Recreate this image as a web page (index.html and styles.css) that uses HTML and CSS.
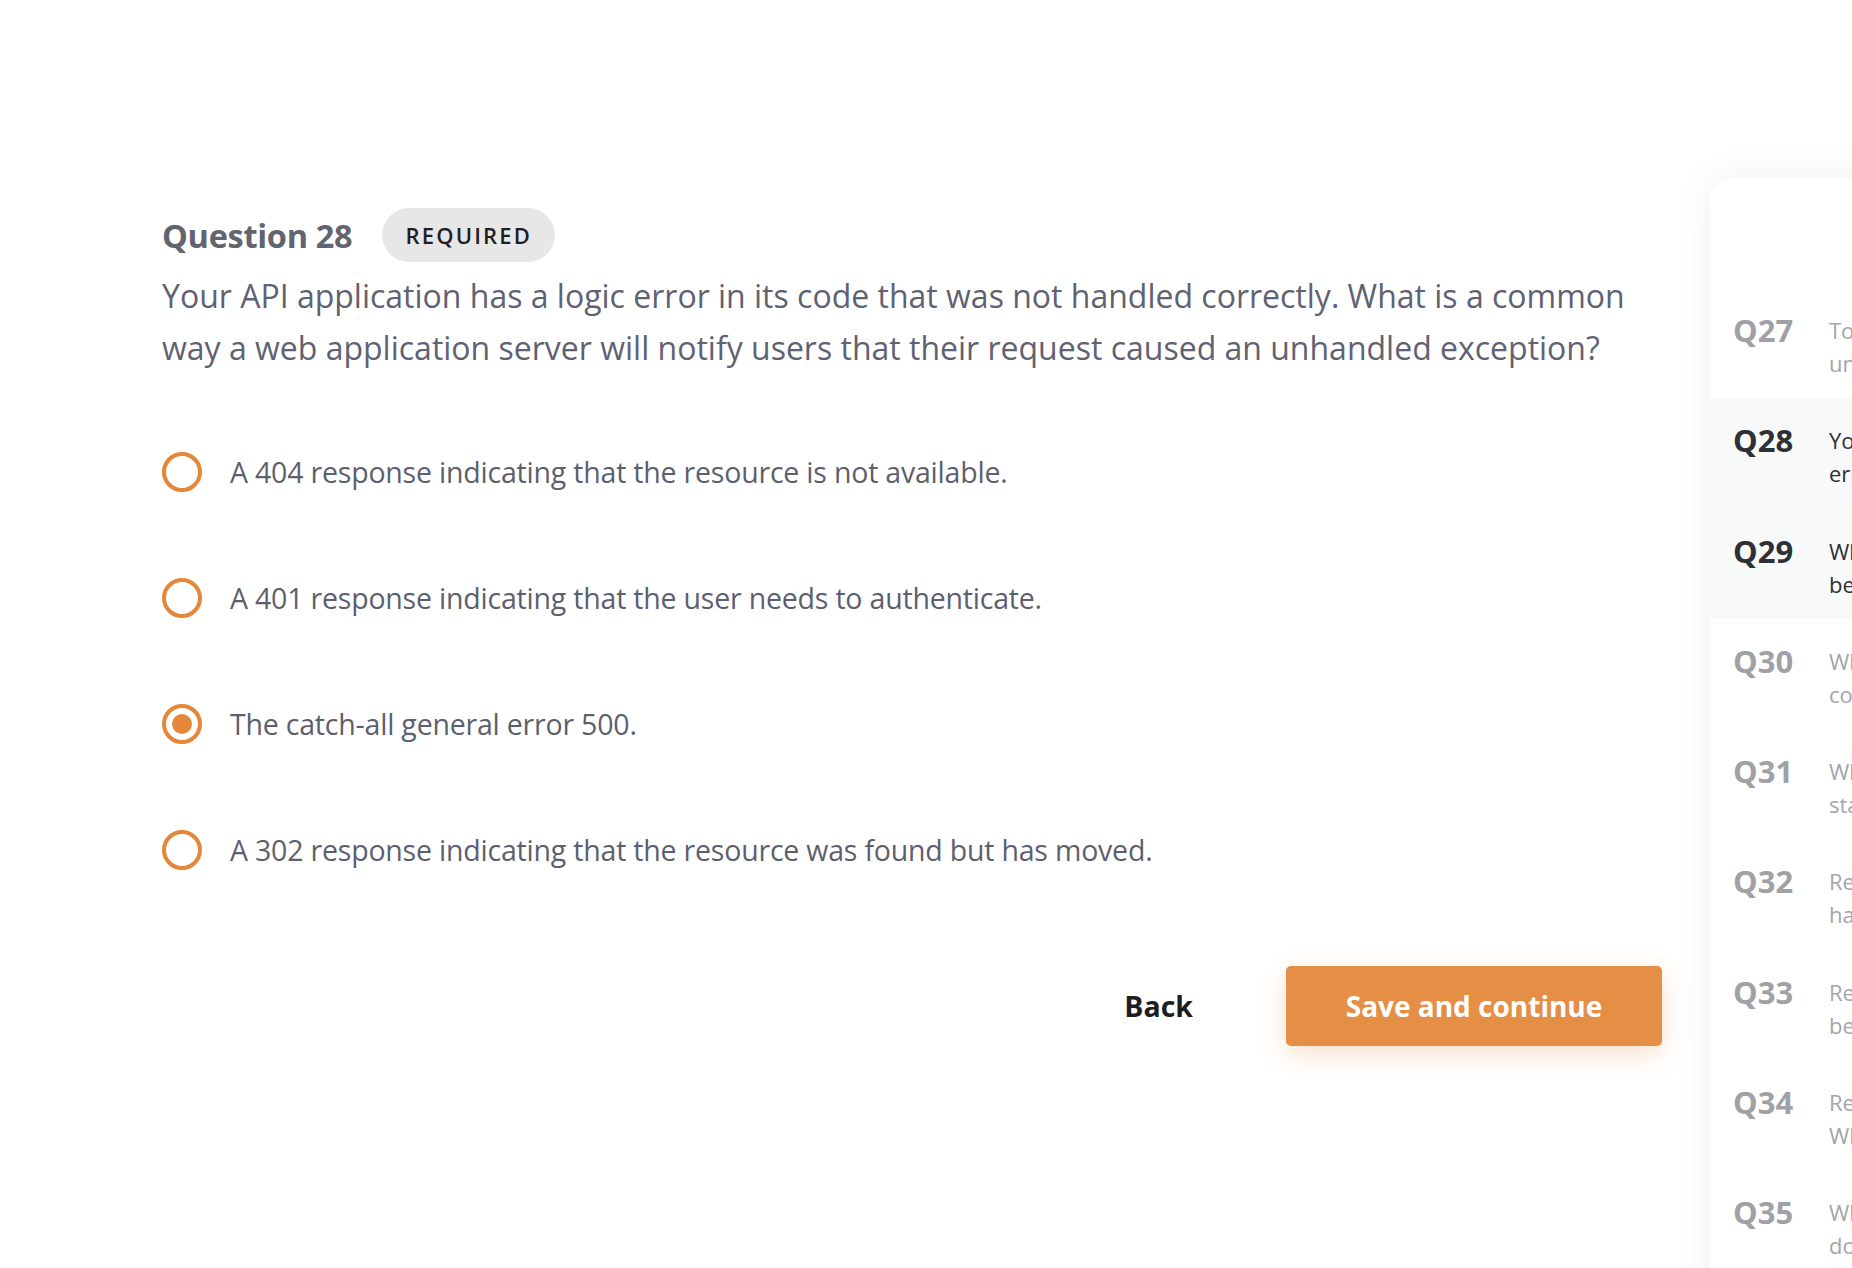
FILE: index.html
```html
<!DOCTYPE html>
<html lang="en">
<head>
<meta charset="utf-8">
<title>Question 28</title>
<link rel="stylesheet" href="styles.css">
</head>
<body>
<div class="page">
  <main class="main">
    <div class="q-head">
      <h2 class="q-title">Question 28</h2>
      <span class="pill">REQUIRED</span>
    </div>
    <p class="q-text">Your API application has a logic error in its code that was not handled correctly. What is a common way a web application server will notify users that their request caused an unhandled exception?</p>
    <ul class="options">
      <li class="option"><span class="radio"></span><span class="opt-label">A 404 response indicating that the resource is not available.</span></li>
      <li class="option"><span class="radio"></span><span class="opt-label">A 401 response indicating that the user needs to authenticate.</span></li>
      <li class="option"><span class="radio checked"></span><span class="opt-label">The catch-all general error 500.</span></li>
      <li class="option"><span class="radio"></span><span class="opt-label">A 302 response indicating that the resource was found but has moved.</span></li>
    </ul>
    <div class="actions">
      <button class="btn-back">Back</button>
      <button class="btn-save">Save and continue</button>
    </div>
  </main>
  <aside class="sidebar">
    <div class="sb-head"></div>
    <div class="sb-row"><span class="qn">Q27</span><div class="desc"><span>To ensure that errors are</span><span>unhandled gracefully</span></div></div>
    <div class="sb-row active"><span class="qn">Q28</span><div class="desc"><span>Your API application has a logic</span><span>error in its code that was not</span></div></div>
    <div class="sb-row active"><span class="qn">Q29</span><div class="desc"><span>Which status code should</span><span>be returned when</span></div></div>
    <div class="sb-row"><span class="qn">Q30</span><div class="desc"><span>What is the purpose of a</span><span>controller in an API</span></div></div>
    <div class="sb-row"><span class="qn">Q31</span><div class="desc"><span>Which of the following</span><span>status codes indicates</span></div></div>
    <div class="sb-row"><span class="qn">Q32</span><div class="desc"><span>Requests should</span><span>handle errors</span></div></div>
    <div class="sb-row"><span class="qn">Q33</span><div class="desc"><span>Requests should</span><span>be validated</span></div></div>
    <div class="sb-row"><span class="qn">Q34</span><div class="desc"><span>Review the code below.</span><span>What is returned</span></div></div>
    <div class="sb-row"><span class="qn">Q35</span><div class="desc"><span>What does the following</span><span>do when called</span></div></div>
  </aside>
</div>
</body>
</html>
```

FILE: styles.css
```css
* { box-sizing: border-box; }
html, body {
  margin: 0;
  padding: 0;
  background: #ffffff;
  overflow: hidden;
  height: 1268px;
}
body {
  font-family: "Open Sans", "Noto Sans", sans-serif;
  color: #5f6170;
}
.page {
  display: flex;
  align-items: flex-start;
  width: 2400px;
}
.main {
  flex: 0 0 1662px;
  padding: 208px 0 0 162px;
}
.q-head {
  display: flex;
  align-items: center;
  gap: 30px;
  height: 54px;
}
.q-title {
  margin: 0;
  font-size: 32.5px;
  font-weight: 700;
  color: #62646f;
  letter-spacing: -0.3px;
}
.pill {
  display: inline-flex;
  align-items: center;
  height: 54px;
  padding: 0 23px;
  border-radius: 27px;
  background: #e7e7e7;
  color: #1f2024;
  font-size: 22px;
  font-weight: 600;
  letter-spacing: 2.2px;
}
.q-text {
  margin: 8px 0 0;
  width: 1484px;
  font-size: 32px;
  line-height: 52px;
  color: #5f6272;
  letter-spacing: 0;
}
.options {
  list-style: none;
  margin: 35px 0 0;
  padding: 0;
}
.option {
  display: flex;
  align-items: center;
  height: 126px;
}
.radio {
  flex: 0 0 40px;
  width: 40px;
  height: 40px;
  border: 4px solid #e5873a;
  border-radius: 50%;
  display: flex;
  align-items: center;
  justify-content: center;
}
.radio.checked::after {
  content: "";
  width: 20px;
  height: 20px;
  border-radius: 50%;
  background: #e5873a;
}
.opt-label {
  margin-left: 28px;
  font-size: 28.5px;
  color: #5d5f6e;
  letter-spacing: -0.2px;
}
.actions {
  display: flex;
  justify-content: flex-end;
  align-items: center;
  margin-top: 53px;
}
.btn-back {
  font-family: inherit;
  background: none;
  border: 0;
  padding: 0 93px 0 0;
  font-size: 28.5px;
  font-weight: 700;
  color: #1d1e22;
  height: 80px;
}
.btn-save {
  font-family: inherit;
  width: 376px;
  height: 80px;
  border: 0;
  border-radius: 5px;
  background: #e58e45;
  color: #ffffff;
  font-size: 28px;
  font-weight: 700;
  box-shadow: 0 8px 26px rgba(229, 142, 69, 0.28);
}
.sidebar {
  flex: 0 0 620px;
  margin: 178px 0 0 48px;
  height: 1200px;
  background: #ffffff;
  border-radius: 22px 0 0 0;
  box-shadow: 0 0 40px rgba(0, 0, 0, 0.07);
}
.sb-head {
  height: 110px;
}
.sb-row {
  display: flex;
  align-items: flex-start;
  height: 110.3px;
  padding: 20px 0 0 23px;
}
.sb-row.active {
  background: #f8f9f9;
}
.qn {
  flex: 0 0 96px;
  font-size: 31px;
  line-height: 44px;
  font-weight: 700;
  color: #a0a1a6;
}
.desc {
  margin-top: 6px;
  display: flex;
  flex-direction: column;
  font-size: 22px;
  line-height: 33px;
  color: #a4a5a9;
}
.sb-row.active .qn,
.sb-row.active .desc {
  color: #2e3037;
}
```
